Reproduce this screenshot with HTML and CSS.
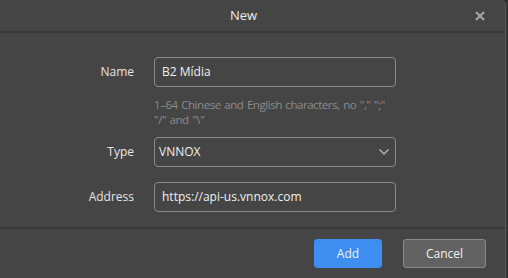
FILE: index.html
```html
<!DOCTYPE html>
<html lang="en">
<head>
    <meta charset="UTF-8" />
    <title>New</title>
    <link rel="stylesheet" href="styles.css">
</head>
<body>

<div class="dialog">
    <div class="dialog-head">
        <span class="dialog-title">New</span>
        <span class="close">
            <svg width="10" height="10" viewBox="0 0 10 10"><path d="M1 1L9 9M9 1L1 9" stroke="#a8a8a8" stroke-width="2"/></svg>
        </span>
    </div>

    <div class="dialog-body">
        <div class="row row-hint">
            <label class="label" for="name">Name</label>
            <div class="field">
                <input class="input" id="name" value="B2 Mídia" />
                <p class="hint">1–64 Chinese and English characters, no "," ";"<br>"/" and "\"</p>
            </div>
        </div>
        <div class="row">
            <label class="label" for="type">Type</label>
            <div class="field">
                <div class="select" id="type">
                    <span>VNNOX</span>
                    <svg width="12" height="8" viewBox="0 0 12 8"><path d="M1.5 1.5L6 6L10.5 1.5" fill="none" stroke="#b0b0b0" stroke-width="1.5"/></svg>
                </div>
            </div>
        </div>
        <div class="row">
            <label class="label" for="address">Address</label>
            <div class="field">
                <input class="input" id="address" value="https://api-us.vnnox.com" />
            </div>
        </div>
    </div>

    <div class="dialog-foot">
        <button class="btn btn-primary">Add</button>
        <button class="btn btn-default">Cancel</button>
    </div>
</div>

</body>
</html>
```

FILE: styles.css
```css
html, body {
    margin: 0;
    background: #333;
}
body {
    font-family: "Open Sans", "Noto Sans", sans-serif;
    font-size: 12px;
    color: #e6e6e6;
}
.dialog {
    width: 505px;
    height: 278px;
    background: #454545;
    border-right: 1px solid #5a5a5a;
    border-top-right-radius: 5px;
    display: flex;
    flex-direction: column;
}
.dialog-head {
    height: 31px;
    border-bottom: 2px solid #383838;
    position: relative;
    display: flex;
    align-items: center;
    justify-content: center;
}
.dialog-title {
    font-size: 13px;
    color: #ececec;
    margin-left: -18px;
}
.close {
    position: absolute;
    right: 20px;
    top: 11px;
    line-height: 0;
}
.dialog-body {
    flex: 1;
    padding-top: 24px;
    border-bottom: 2px solid #383838;
}
.row {
    display: flex;
    margin-bottom: 15px;
}
.row-hint {
    margin-bottom: 10px;
}
.label {
    width: 134px;
    text-align: right;
    padding-right: 20px;
    line-height: 30px;
    font-size: 12px;
    color: #e6e6e6;
}
.field {
    width: 242px;
}
.input, .select {
    box-sizing: border-box;
    width: 242px;
    height: 30px;
    border: 1px solid #8a8a8a;
    border-radius: 4px;
    background: #454545;
    color: #f0f0f0;
    font-family: inherit;
    font-size: 12px;
    padding: 0 7px;
    outline: none;
}
.select {
    display: flex;
    align-items: center;
    justify-content: space-between;
    padding: 0 5px 0 4px;
}
.hint {
    margin: 10px 0 0;
    font-size: 11.5px;
    letter-spacing: -0.45px;
    word-spacing: 1px;
    line-height: 15px;
    white-space: nowrap;
    color: #8c8c8c;
}
.dialog-foot {
    height: 50px;
    display: flex;
    align-items: center;
    justify-content: flex-end;
    gap: 21px;
    padding-right: 19px;
}
.btn {
    height: 29px;
    border-radius: 3px;
    font-family: inherit;
    font-size: 12px;
    color: #f2f2f2;
    cursor: pointer;
}
.btn-primary {
    width: 68px;
    background: #3d8ef0;
    border: 1px solid #3d8ef0;
}
.btn-default {
    width: 83px;
    background: #626262;
    border: 1px solid #8a8a8a;
}
```
